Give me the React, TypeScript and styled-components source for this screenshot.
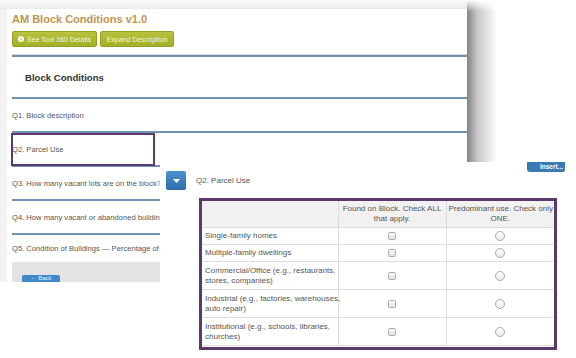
import React from 'react'
import styled, { createGlobalStyle } from 'styled-components'

const GlobalStyle = createGlobalStyle`
  html, body {
    margin: 0;
    padding: 0;
    background: #fff;
  }
  body {
    font-family: "Liberation Sans", Arial, sans-serif;
  }
`

const Stage = styled.div`
  position: relative;
  width: 576px;
  height: 358px;
  overflow: hidden;
  background: #fff;
`

// screenshot in the back
const BackShot = styled.div`
  display: flex;
  width: 497px;
  height: 282px;
`

const BackFrame = styled.div`
  width: 467px;
  height: 282px;
  box-sizing: border-box;
  padding: 9px 0 0 7px;
  background: linear-gradient(to bottom, #f9f9f9 0, #ebebeb 9px, #f2f2f2 9px);
`

const ShadowStrip = styled.div`
  width: 30px;
  background: linear-gradient(to right, rgba(0, 0, 0, 0.48), rgba(0, 0, 0, 0.22) 35%, rgba(0, 0, 0, 0));
  mask-image: linear-gradient(to bottom, transparent 0, #000 12px);
`

const PageBody = styled.div`
  height: 100%;
  background: #fff;
  padding-left: 5px;
  overflow: hidden;
  display: flex;
  flex-direction: column;
`

const Title = styled.h1`
  margin: 3px 0 0;
  font-size: 11px;
  line-height: 14px;
  font-weight: bold;
  color: #c09550;
`

const ButtonRow = styled.div`
  display: flex;
  gap: 3px;
  margin-top: 5px;
`

const OliveButton = styled.div<{ $w: number }>`
  width: ${(p) => p.$w}px;
  height: 16px;
  box-sizing: border-box;
  display: flex;
  align-items: center;
  justify-content: center;
  gap: 3px;
  border-radius: 2px;
  border: 1px solid #949f22;
  background: linear-gradient(to bottom, #b8c23e, #a2b027);
  color: #f4f6dc;
  font-size: 7px;
`

const SectionHeader = styled.div`
  margin-top: 8px;
  height: 40px;
  border-top: 2px solid #6f90b0;
  border-bottom: 2px solid #6f90b0;
  box-shadow: 0 -1px 0 #d2d9de;
  display: flex;
  align-items: center;
  padding-left: 13px;
  font-size: 9.6px;
  font-weight: bold;
  color: #333;
`

const QuestionRow = styled.div<{ $last?: boolean; $highlight?: boolean }>`
  position: relative;
  height: ${(p) => (p.$last ? 27 : 32)}px;
  flex-shrink: 0;
  border-bottom: ${(p) => (p.$last ? 'none' : '2px solid #7093b4')};
  display: flex;
  align-items: center;
  font-size: 7.6px;
  color: #555;
  white-space: nowrap;

  &::before {
    content: '';
    display: ${(p) => (p.$highlight ? 'block' : 'none')};
    position: absolute;
    left: -1px;
    top: 0;
    width: 144px;
    height: 33px;
    box-sizing: border-box;
    border: 2.5px solid #5d386b;
  }
`

const GrayFooter = styled.div`
  height: 20px;
  background: #e3e3e3;
  padding: 13px 0 0 10px;
  box-sizing: border-box;
`

const BackButton = styled.div`
  width: 38px;
  height: 14px;
  border-radius: 2px;
  background: #3f89c8;
  color: #e6f0f8;
  font-size: 6px;
  line-height: 7px;
  display: flex;
  justify-content: center;
`

// popup screenshot in front
const FrontPanel = styled.div`
  position: absolute;
  left: 160px;
  top: 162px;
  right: 0;
  bottom: 0;
  background: #fff;
  display: flex;
  flex-direction: column;
`

const InsertBar = styled.div`
  display: flex;
  justify-content: flex-end;
  padding-right: 11px;
`

const InsertButton = styled.div`
  width: 38px;
  height: 10px;
  border-radius: 0 0 2px 3px;
  background: #3a7bb3;
  color: #fff;
  font-size: 6.5px;
  font-weight: bold;
  line-height: 9px;
  text-align: right;
  padding-right: 2px;
  box-sizing: border-box;
`

const PickRow = styled.div`
  display: flex;
  align-items: center;
  gap: 10px;
  margin-top: -1px;
  padding-left: 6px;
  font-size: 8px;
  color: #555;
`

const DropButton = styled.div`
  width: 20px;
  height: 19px;
  border-radius: 2px;
  background: linear-gradient(to bottom, #4b92cf, #2c6ea7);
  display: flex;
  align-items: center;
  justify-content: center;
`

const TableFrame = styled.div`
  margin: 8px 0 0 39px;
  width: 358px;
  box-sizing: border-box;
  border: 3px solid #5d386b;
  padding-bottom: 1px;
`

const Grid = styled.table`
  width: 352px;
  border-collapse: collapse;
  table-layout: fixed;
  font-size: 8px;
  line-height: 10px;
  color: #555;
  white-space: nowrap;
`

const HeadCell = styled.th`
  background: #f1f1f1;
  font-weight: normal;
  text-align: center;
  padding: 3px 2px;
  border-left: 1px solid #dcdcdc;
  border-bottom: 1px solid #dcdcdc;
  &:first-child {
    border-left: none;
  }
`

const Cell = styled.td<{ $tall?: boolean; $center?: boolean }>`
  padding: ${(p) => (p.$tall ? '3.5px' : '3px')} 3px;
  text-align: ${(p) => (p.$center ? 'center' : 'left')};
  border-left: 1px solid #dcdcdc;
  border-bottom: 1px solid #dcdcdc;
  &:first-child {
    border-left: none;
  }
`

const CheckBox = styled.span`
  display: inline-block;
  width: 6px;
  height: 6px;
  border: 1px solid #a9a9a9;
  border-radius: 1.5px;
  background: linear-gradient(to bottom, #fbfbfb, #e2e2e2);
  vertical-align: middle;
`

const RadioDot = styled.span`
  display: inline-block;
  width: 8px;
  height: 8px;
  border: 1px solid #a9a9a9;
  border-radius: 50%;
  background: linear-gradient(to bottom, #fdfdfd, #ececec);
  vertical-align: middle;
`

const uses: string[][] = [
  ['Single-family homes'],
  ['Multiple-family dwellings'],
  ['Commercial/Office (e.g., restaurants,', 'stores, companies)'],
  ['Industrial (e.g., factories, warehouses,', 'auto repair)'],
  ['Institutional (e.g., schools, libraries,', 'churches)'],
]

function InfoIcon() {
  return (
    <svg width="6" height="6" viewBox="0 0 10 10">
      <circle cx="5" cy="5" r="5" fill="#fff" />
      <rect x="4.2" y="4.2" width="1.6" height="3.6" fill="#a5b22a" />
      <circle cx="5" cy="2.8" r="0.9" fill="#a5b22a" />
    </svg>
  )
}

export default function App() {
  return (
    <Stage>
      <GlobalStyle />
      <BackShot>
        <BackFrame>
          <PageBody>
            <Title>AM Block Conditions v1.0</Title>
            <ButtonRow>
              <OliveButton $w={85}>
                <InfoIcon />
                See Tool 360 Details
              </OliveButton>
              <OliveButton $w={74}>Expand Description</OliveButton>
            </ButtonRow>
            <SectionHeader>Block Conditions</SectionHeader>
            <QuestionRow>Q1. Block description</QuestionRow>
            <QuestionRow $highlight>Q2. Parcel Use</QuestionRow>
            <QuestionRow>Q3. How many vacant lots are on the block?</QuestionRow>
            <QuestionRow>Q4. How many vacant or abandoned buildings are on the block?</QuestionRow>
            <QuestionRow $last>Q5. Condition of Buildings — Percentage of buildings</QuestionRow>
            <GrayFooter>
              <BackButton>← Back</BackButton>
            </GrayFooter>
          </PageBody>
        </BackFrame>
        <ShadowStrip />
      </BackShot>

      <FrontPanel>
        <InsertBar>
          <InsertButton>Insert...</InsertButton>
        </InsertBar>
        <PickRow>
          <DropButton>
            <svg width="7" height="4" viewBox="0 0 7 4">
              <path d="M0 0 H7 L3.5 4 Z" fill="#fff" />
            </svg>
          </DropButton>
          Q2. Parcel Use
        </PickRow>
        <TableFrame>
          <Grid>
            <colgroup>
              <col style={{ width: 136 }} />
              <col style={{ width: 108 }} />
              <col style={{ width: 108 }} />
            </colgroup>
            <thead>
              <tr>
                <HeadCell />
                <HeadCell>
                  Found on Block. Check ALL
                  <br />
                  that apply.
                </HeadCell>
                <HeadCell>
                  Predominant use. Check only
                  <br />
                  ONE.
                </HeadCell>
              </tr>
            </thead>
            <tbody>
              {uses.map((lines) => {
                const tall = lines.length > 1
                return (
                  <tr key={lines[0]}>
                    <Cell $tall={tall}>
                      {lines[0]}
                      {tall && (
                        <>
                          <br />
                          {lines[1]}
                        </>
                      )}
                    </Cell>
                    <Cell $tall={tall} $center>
                      <CheckBox />
                    </Cell>
                    <Cell $tall={tall} $center>
                      <RadioDot />
                    </Cell>
                  </tr>
                )
              })}
            </tbody>
          </Grid>
        </TableFrame>
      </FrontPanel>
    </Stage>
  )
}
